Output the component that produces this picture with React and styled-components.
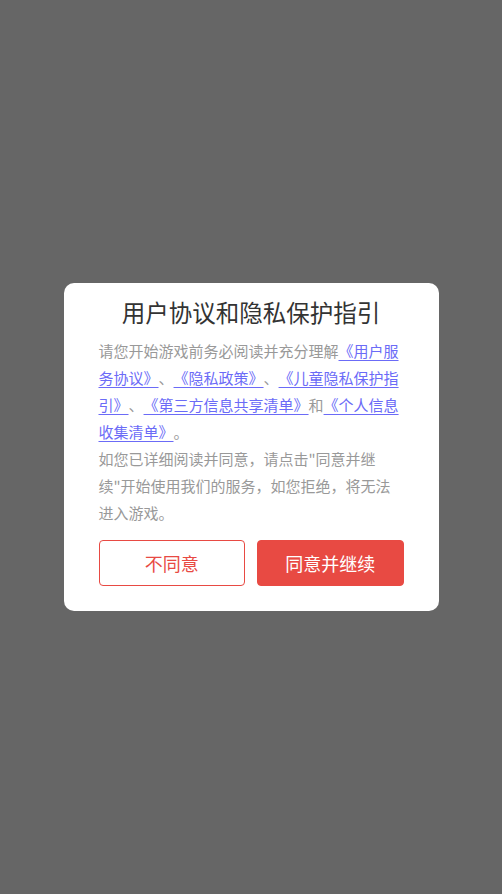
import styled, { createGlobalStyle } from "styled-components";

const GlobalStyle = createGlobalStyle`
  html, body {
    margin: 0;
    padding: 0;
    background: #666666;
  }
  body {
    font-family: "Noto Sans CJK SC", "Noto Sans", sans-serif;
    text-spacing-trim: space-all;
  }
`;

const Overlay = styled.div`
  display: flex;
  align-items: center;
  justify-content: center;
  width: 100vw;
  height: 100vh;
  background: #666666;
`;

const Dialog = styled.div`
  box-sizing: border-box;
  width: 375px;
  background: #ffffff;
  border-radius: 10px;
  padding: 14px 35px 25px;
`;

const Titulo = styled.h1`
  margin: 0 0 10px;
  font-size: 23.5px;
  line-height: 30px;
  font-weight: 400;
  color: #333333;
  text-align: center;
`;

const Texto = styled.p`
  margin: 0;
  font-size: 15px;
  line-height: 27px;
  color: #999999;
  text-align: left;
  text-spacing-trim: space-all;
`;

const Link = styled.a`
  color: #6b6bf7;
  text-decoration: underline;
  text-underline-offset: 3px;
  cursor: pointer;
`;

const Botoes = styled.div`
  display: flex;
  gap: 12px;
  margin-top: 14px;
`;

const Botao = styled.button`
  flex: 1;
  height: 46px;
  border-radius: 4px;
  border: 1px solid #e84a43;
  background: ${(p) => (p.$primario ? "#e84a43" : "#ffffff")};
  color: ${(p) => (p.$primario ? "#ffffff" : "#e84a43")};
  font-family: inherit;
  font-size: 18px;
  cursor: pointer;
`;

const links = {
  usuario: "《用户服务协议》",
  privacidade: "《隐私政策》",
  infantil: "《儿童隐私保护指引》",
  terceiros: "《第三方信息共享清单》",
  pessoal: "《个人信息收集清单》",
};

export default function App() {
  return (
    <>
      <GlobalStyle />
      <Overlay>
        <Dialog>
          <Titulo>用户协议和隐私保护指引</Titulo>
          <Texto>
            请您开始游戏前务必阅读并充分理解<Link>{links.usuario}</Link>、
            <Link>{links.privacidade}</Link>、<Link>{links.infantil}</Link>、
            <Link>{links.terceiros}</Link>和<Link>{links.pessoal}</Link>。
          </Texto>
          <Texto>
            如您已详细阅读并同意，请点击"同意并继续"开始使用我们的服务，如您拒绝，将无法进入游戏。
          </Texto>
          <Botoes>
            <Botao>不同意</Botao>
            <Botao $primario>同意并继续</Botao>
          </Botoes>
        </Dialog>
      </Overlay>
    </>
  );
}
